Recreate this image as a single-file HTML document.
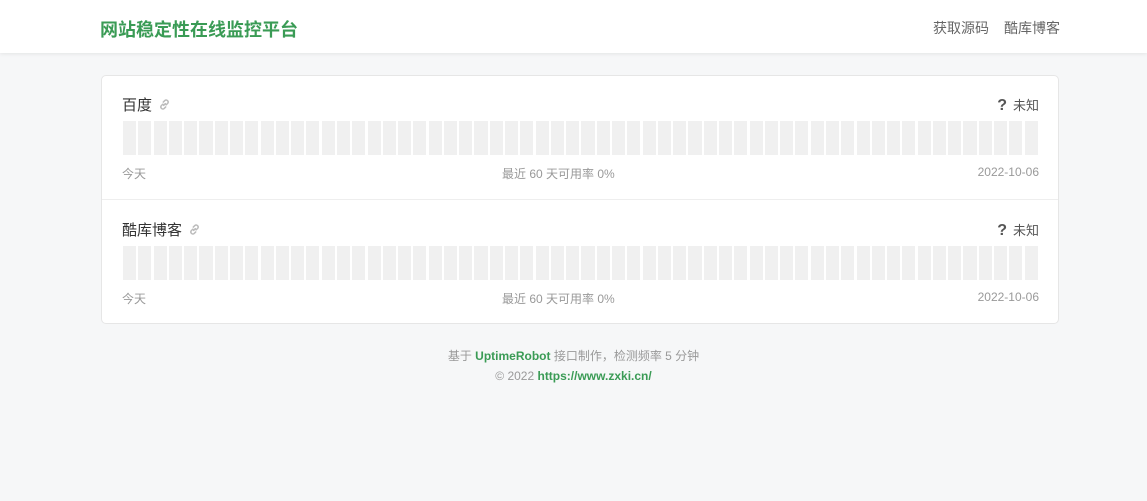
<!DOCTYPE html><html><head><meta charset="utf-8"><style>
*{margin:0;padding:0;box-sizing:border-box}
body{width:1147px;height:501px;background:#f6f7f8;font-family:"Liberation Sans","Noto Sans CJK SC",sans-serif;overflow:hidden;position:relative}
.hd{position:absolute;left:0;top:0;width:1147px;height:53px;background:#fff;box-shadow:0 1px 4px rgba(0,0,0,.08)}
.logo{position:absolute;left:100px;top:16px;font-size:18px;font-weight:bold;color:#3a9b55}
.nav{position:absolute;top:18px;font-size:14px;color:#666}
.card{position:absolute;left:101px;top:75px;width:958px;height:249px;background:#fff;border:1px solid #e6e6e6;border-radius:5px}
.it{position:absolute;left:0;width:956px;height:124px}
.nm{position:absolute;left:20px;top:18px;font-size:15px;color:#333;display:flex;align-items:center;gap:6px}
.st{position:absolute;right:19px;top:19px;font-size:13px;color:#555}
.st b{font-size:16px;margin-right:6px;color:#555}
.bars{position:absolute;left:21px;top:45px;display:flex;gap:2.2px}
.bars i{display:block;width:13.1px;height:34px;background:#f0f0f0}
.ft{position:absolute;top:89px;font-size:12px;color:#999}
.foot{position:absolute;left:0;width:1147px;text-align:center;font-size:12px;color:#999}
.foot b{color:#3a9b55}
</style></head><body>
<div class="hd"><div class="logo">网站稳定性在线监控平台</div><div class="nav" style="left:933px">获取源码</div><div class="nav" style="left:1004px">酷库博客</div></div>
<div class="card">
<div class="it" style="top:0;border-bottom:1px solid #eee"><div class="nm">百度 <svg width="13" height="13" viewBox="0 0 16 16" fill="none" stroke="#bbb" stroke-width="1.8" stroke-linecap="round"><path d="M7 9l2-2M6 7.5L4 9.5a2.5 2.5 0 003.5 3.5l2-2M10 8.5l2-2A2.5 2.5 0 008.5 3l-2 2"/></svg></div><div class="st"><b>?</b>未知</div><div class="bars" id="b1"></div><div class="ft" style="left:20px">今天</div><div class="ft" style="left:400px">最近 60 天可用率 0%</div><div class="ft" style="right:19px">2022-10-06</div></div>
<div class="it" style="top:125px"><div class="nm">酷库博客 <svg width="13" height="13" viewBox="0 0 16 16" fill="none" stroke="#bbb" stroke-width="1.8" stroke-linecap="round"><path d="M7 9l2-2M6 7.5L4 9.5a2.5 2.5 0 003.5 3.5l2-2M10 8.5l2-2A2.5 2.5 0 008.5 3l-2 2"/></svg></div><div class="st"><b>?</b>未知</div><div class="bars" id="b2"></div><div class="ft" style="left:20px">今天</div><div class="ft" style="left:400px">最近 60 天可用率 0%</div><div class="ft" style="right:19px">2022-10-06</div></div>
</div>
<div class="foot" style="top:347px">基于 <b>UptimeRobot</b> 接口制作，检测频率 5 分钟</div>
<div class="foot" style="top:369px">© 2022 <b>https://www.zxki.cn/</b></div>
<script>for(const id of["b1","b2"]){let s="";for(let i=0;i<60;i++)s+="<i></i>";document.getElementById(id).innerHTML=s}</script>
</body></html>
